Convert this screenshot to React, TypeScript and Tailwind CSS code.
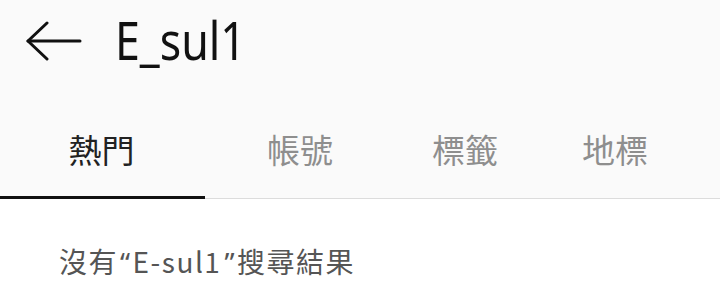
import React from "react";

const tabs = [
  { label: "熱門", w: "w-[203px]", active: true },
  { label: "帳號", w: "w-[194px]", active: false },
  { label: "標籤", w: "w-[136px]", active: false },
  { label: "地標", w: "w-[164px]", active: false },
];

export default function App() {
  return (
    <div className="w-[720px] h-[288px] overflow-hidden bg-white" style={{ fontFamily: '"Noto Sans", "Noto Sans CJK TC", sans-serif' }}>
      <div className="bg-[#fafafa]">
        <div className="h-[82px] flex items-center">
          <div className="w-[115px] flex items-center pl-[26px]">
            <svg width="56" height="40" viewBox="0 0 56 40" fill="none" stroke="#111" strokeWidth="3" strokeLinecap="round" strokeLinejoin="round">
              <path d="M21 2 L2 20 L21 38" />
              <path d="M2 20 H54" />
            </svg>
          </div>
          <div className="text-[52px] leading-none text-[#111] -mt-[2px] scale-x-[0.86] origin-left">E_sul1</div>
        </div>
        <div className="flex h-[114px]">
          {tabs.map((t) => (
            <div
              key={t.label}
              className={`${t.w} flex items-center justify-center text-[33px] pt-[22px] ${t.active ? "text-[#222]" : "text-[#8e8e8e]"}`}
              style={{ fontFamily: '"Noto Sans CJK TC", sans-serif' }}
            >
              {t.label}
            </div>
          ))}
        </div>
      </div>
      <div className="relative h-[3px] bg-[#fafafa]">
        <div className="absolute left-0 bottom-0 w-full h-[1px] bg-[#dcdcdc]" />
        <div className="absolute left-0 top-0 w-[205px] h-[3px] bg-[#111]" />
      </div>
      <div className="pl-[59px] pt-[48px] text-[28px] tracking-[1.5px] leading-none text-[#555]" style={{ fontFamily: '"Noto Sans CJK TC", sans-serif' }}>
        沒有<span className="ml-[2px] mr-[1px]" style={{ fontFamily: '"Noto Sans", sans-serif' }}>“</span>E-sul1<span className="ml-[3px] mr-[1px]" style={{ fontFamily: '"Noto Sans", sans-serif' }}>”</span>搜尋結果
      </div>
    </div>
  );
}
